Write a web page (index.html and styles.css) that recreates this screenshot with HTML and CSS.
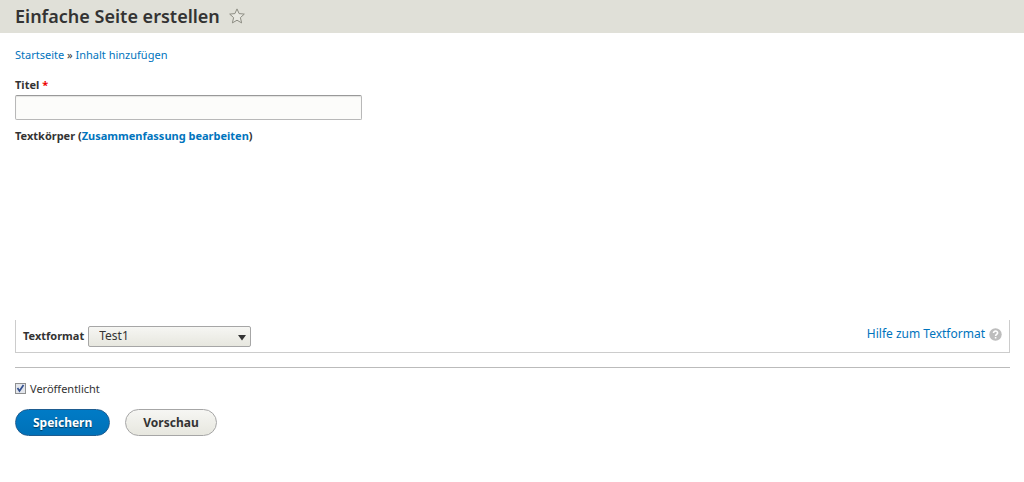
FILE: index.html
```html
<!DOCTYPE html>
<html lang="de">
<head>
<meta charset="utf-8">
<title>Einfache Seite erstellen</title>
<link rel="stylesheet" href="styles.css">
</head>
<body>
<header class="page-header">
  <h1 class="page-title">Einfache Seite erstellen</h1>
  <button class="shortcut" type="button" aria-label="Zu Verknüpfungen hinzufügen">
    <svg width="16" height="16" viewBox="0 0 16 16"><path d="M8 .9l2.1 4.7 5.2.5-3.9 3.5 1.2 5.3L8 12.2l-4.6 2.7 1.2-5.3L.7 6.1l5.2-.5z" fill="#e8e8e1" stroke="#8c8c82" stroke-linejoin="round"/></svg>
  </button>
</header>
<main class="content">
  <nav class="breadcrumb"><a href="#">Startseite</a> » <a href="#">Inhalt hinzufügen</a></nav>
  <form class="node-form">
    <label class="label" for="title">Titel <span class="required">*</span></label>
    <input class="text-input" id="title" type="text">
    <div class="label body-label">Textkörper (<a href="#">Zusammenfassung bearbeiten</a>)</div>
    <div class="editor-space"></div>
    <div class="format-bar">
      <label class="format-label" for="format">Textformat</label>
      <span class="select-wrap">
        <select class="select" id="format"><option>Test1</option></select>
        <svg class="arrow" width="8" height="6" viewBox="0 0 8 6"><path d="M0 0h8L4 5.500z" fill="#333"/></svg>
      </span>
      <a class="help" href="#">Hilfe zum Textformat
        <svg width="13" height="13" viewBox="0 0 13 13"><circle cx="6.5" cy="6.5" r="6.2" fill="#bdbdbd"/><path d="M4.500 5c0-2.700 4.200-2.500 4.100-.1 0 1.400-2 1.400-2 3M6.600 9v1.500" fill="none" stroke="#fff" stroke-width="1.600"/></svg>
      </a>
    </div>
    <footer class="form-footer">
      <div class="publish">
        <span class="check-wrap">
          <input class="checkbox" id="published" type="checkbox" checked>
          <svg class="tick" width="11" height="11" viewBox="0 0 11 11"><path d="M2.500 5l2 3L8.500 2" fill="none" stroke="#34508f" stroke-width="1.700"/></svg>
        </span>
        <label for="published">Veröffentlicht</label>
      </div>
      <div class="actions">
        <button class="button primary" type="button">Speichern</button>
        <button class="button" type="button">Vorschau</button>
      </div>
    </footer>
  </form>
</main>
</body>
</html>
```
FILE: styles.css
```css
* { box-sizing: border-box; }
body { margin: 0; background: #fff; color: #333; font: 11px/16px "Noto Sans", sans-serif; }
a { color: #0074bd; text-decoration: none; }
.page-header { display: flex; align-items: center; gap: 9px; height: 33px; padding: 0 15px 2px; background: #e0e0d8; }
.page-title { margin: 0; font-size: 18px; line-height: 24px; font-weight: 600; }
.shortcut { display: flex; padding: 0; border: 0; background: none; }
.content { padding: 14px 14px 14px 15px; }
.breadcrumb { margin-bottom: 14px; }
.label { display: block; font-weight: 700; }
.required { color: #e00; }
.text-input { display: block; width: 347px; max-width: 100%; height: 25px; margin: 2px 0 8px; padding: 0 8px; border: 1px solid #b8b8b8; border-top-color: #999; border-radius: 2px; background: #fcfcfa; box-shadow: inset 0 1px 1px #0000001a; }
.editor-space { height: 176px; }
.format-bar { display: flex; align-items: center; height: 33px; padding: 0 7px; border: 1px solid #ccc; border-top: 0; }
.format-label { margin-right: 4px; font-weight: 700; }
.select-wrap { position: relative; display: flex; }
.select { width: 163px; height: 21px; padding: 0 10px; appearance: none; border: 1px solid #a6a6a6; border-radius: 2px; background: linear-gradient(#f6f6f3, #e7e7df); color: #333; font: 12px/16px "Noto Sans", sans-serif; }
.arrow { position: absolute; right: 5px; top: 9px; pointer-events: none; }
.help { display: flex; align-items: center; gap: 4px; margin-left: auto; padding-bottom: 4px; font-size: 12px; }
.form-footer { margin-top: 14px; padding-top: 13px; border-top: 1px solid #bbb; }
.publish { display: flex; align-items: center; gap: 4px; }
.check-wrap { position: relative; display: flex; padding-bottom: 2px; }
.checkbox { width: 11px; height: 11px; margin: 0; appearance: none; border: 1px solid #8e8f8f; background: #e3e6ec; }
.tick { position: absolute; left: 0; top: 0; pointer-events: none; }
.actions { display: flex; gap: 15px; margin-top: 12px; }
.button { height: 27px; padding: 0 17px; border: 1px solid #a6a6a6; border-radius: 14px; background: linear-gradient(#f6f6f3, #e7e7df); color: #333; font: 700 12px/16px "Noto Sans", sans-serif; }
.primary { border-color: #1e5c90; background: linear-gradient(#007bc6, #0071b8); color: #fff; text-shadow: 0 1px 1px #00000080; }
```
